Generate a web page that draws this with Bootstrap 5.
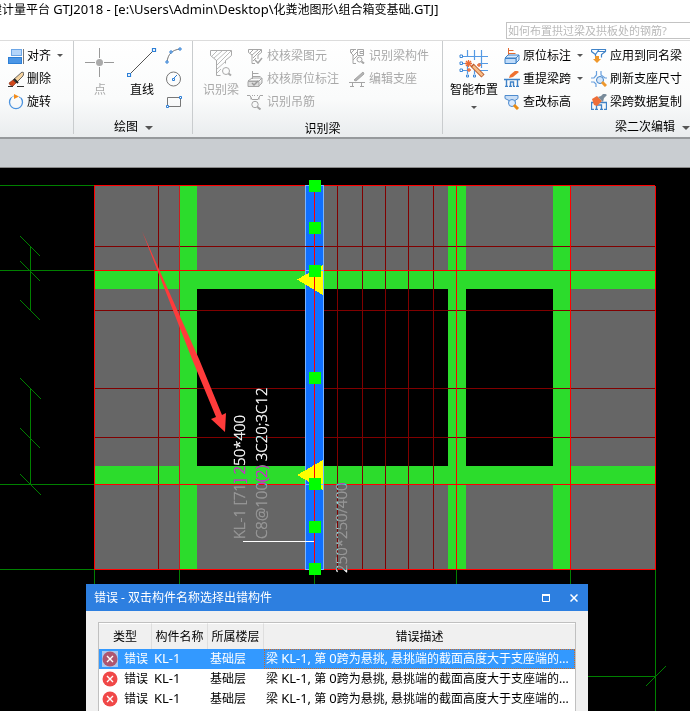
<!DOCTYPE html>
<html lang="zh-CN">
<head>
<meta charset="utf-8">
<meta name="viewport" content="width=device-width, initial-scale=1">
<title>计量平台 GTJ2018</title>
<link href="https://cdn.jsdelivr.net/npm/bootstrap@5.3.0/dist/css/bootstrap.min.css" rel="stylesheet">
<style>
  body { font-family: "Noto Sans", "Noto Sans CJK SC", sans-serif; font-size: 12px; line-height: 20px; color: #000; background: #fff; }
  .latin { font-size: 13px; line-height: 1; }
  .app-title { height: 22px; margin-left: -10px; }
  .search-row { height: 18px; }
  .ask-box { width: 184px; height: 17px; border: 1px solid #c3c3c3; border-right: 0; font-size: 11px; color: #555; outline: 0; padding: 0 1px; }
  .ask-box::placeholder { color: #b9b9b9; opacity: 1; }
  .ribbon { border-top: 1px solid #dcdcdc; border-bottom: 2px solid #96999c; height: 99px; background: linear-gradient(#fff, #fafbfb 60%, #e9ecee); }
  .ribbon button { border: 0; background: none; padding: 0; color: inherit; white-space: nowrap; line-height: 20px; text-align: left; }
  .ribbon button:disabled { color: #a9a9a9; }
  .ribbon svg { display: block; flex: none; }
  .tool-group { padding: 3px 0 2px; border-right: 1px solid #c9ccce; margin-bottom: 3px; }
  .tool-group:last-child { border-right: 0; }
  .g-edit { width: 74px; padding-left: 8px; }
  .g-draw { width: 119px; padding-left: 11px; }
  .g-find { width: 250px; padding-left: 10px; }
  .g-beam { padding-left: 7px; }
  .tool-list > button { height: 23px; display: flex; align-items: center; gap: 3px; }
  .g-find .tool-list > button { gap: 4px; }
  .big-tool { display: flex; flex-direction: column; align-items: center; height: 69px; padding-top: 4px !important; gap: 2px; }
  .group-name { height: 20px; margin-top: 4px; }
  .group-name.plain { padding-top: 2px; }
  .g-draw .group-name { padding-right: 10px; }
  .drop-mark { display: inline-block; border: 3px solid transparent; border-top-color: #555; border-bottom: 0; flex: none; }
  .drop-mark.wide { border-width: 4px 4px 0; }
  .tool-list .drop-mark { margin-left: 3px; }
  .col-check { width: 102px; }
  .col-label { width: 87px; margin-left: 6px; }
  .tab-strip { height: 29px; background: #c9cdd1; border-bottom: 1px solid #888; }
  .stage { background: #000; min-height: 0; }
  .axis { stroke: #008000; }
  .grid-red { stroke: #f00; }
  .grid-dark { stroke: #800000; }
  .annot { font-family: "Noto Sans", sans-serif; font-size: 15px; font-weight: 300; fill: #fff; stroke: #fff; stroke-width: .3; mix-blend-mode: difference; }
  .err-window { left: 86px; top: 416px; width: 502px; background: #f0f0f0; }
  .err-title { height: 27px; background: #2d7fe0; color: #fff; padding: 0 9px 0 8px; }
  .err-title button { border: 0; background: none; padding: 0; width: 10px; height: 12px; line-height: 0; }
  .err-tools { gap: 18px; }
  .err-body { padding: 11px 12px 12px; }
  .err-table { table-layout: fixed; width: 100%; background: #fff; border: 1px solid #c0c0c0; border-collapse: separate; border-spacing: 0; }
  .err-table th { height: 26px; padding: 0; text-align: center; font-weight: 400; background: #f0f0f0; border-right: 1px solid #dedede; border-top: 1px solid #fff; }
  .err-table th:last-child { border-right: 0; }
  .err-table td { height: 20px; line-height: 18px; padding: 0 4px 0 2px; white-space: nowrap; overflow: hidden; }
  .err-table td:first-child { padding-left: 3px; }
  .err-table .picked td { background: #3399ff; color: #fff; }
  .err-table .picked td:last-child { outline: 1px dotted #d2691e; outline-offset: -1px; }
  .c-kind { width: 53px; } .c-name { width: 56px; } .c-floor { width: 56px; }
  .picked .bad-mark { background: #a9c9ef; }
  .picked .bad-mark circle { fill: #ae5670; }
</style>
<script src="https://cdn.jsdelivr.net/npm/bootstrap@5.3.0/dist/js/bootstrap.bundle.min.js"></script>
</head>
<body class="vh-100 d-flex flex-column overflow-hidden">
<header>
  <div class="app-title text-nowrap">建计量平台 <span class="latin">GTJ2018 - [e:\Users\Admin\Desktop\</span>化粪池图形<span class="latin">\</span>组合箱变基础<span class="latin">.GTJ]</span></div>
  <div class="search-row d-flex justify-content-end">
    <input class="ask-box" type="text" aria-label="搜索帮助" placeholder="如何布置拱过梁及拱板处的钢筋?">
  </div>
  <div class="ribbon d-flex">
    <section class="tool-group g-edit">
      <div class="tool-list">
        <button type="button"><svg width="16" height="16" fill="none"><rect x="3.500" y="1.500" width="10" height="6" fill="#b3d5fa" stroke="#6ca6e6"/><rect x=".5" y="9.500" width="13" height="6" fill="#4b96e6" stroke="#2d7fd6"/><path d="M15.500 1v15" stroke="#777"/></svg>对齐<span class="drop-mark"></span></button>
        <button type="button"><svg width="16" height="16"><path d="M0 15.500h5m4 0h7" stroke="#333"/><path d="M14 1l2 1-1 3-7 7-3-3z" fill="#f5d3a0" stroke="#444" stroke-width=".8"/><path d="M5 9l3 3-3 3-3-1-1-2z" fill="#d2481c" stroke="#7a2a10" stroke-width=".6"/><path d="M6 8l4 4" stroke="#222" stroke-width="2"/></svg>删除</button>
        <button type="button"><svg width="16" height="16" fill="none"><path d="M3 4a6.500 6.500 0 1 0 10 0" stroke="#4c93df" stroke-width="1.300"/><path d="M3 4a6 6 0 0 1 3-2m5 1 2 1" stroke="#4c93df" stroke-dasharray="2 1"/><path d="M6 0l5 2.500L6 5z" fill="#f28c1c"/></svg>旋转</button>
      </div>
      <div class="group-name"></div>
    </section>
    <section class="tool-group g-draw">
      <div class="d-flex">
        <button type="button" class="big-tool" disabled><svg width="30" height="30"><path d="M14.500 0v10m0 9v10M0 14.500h10m9 0h10" stroke="#999"/><circle cx="14.500" cy="14.500" r="3.500" fill="#aaa"/></svg>点</button>
        <button type="button" class="big-tool ms-2 ps-1"><svg width="30" height="30" fill="#fff"><path d="M2 27L27 2" stroke="#555"/><path d="M.5 25.500h3v3h-3zM25.500 .5h3v3h-3z" stroke="#2d7fd6" stroke-width="1.200"/></svg>直线</button>
        <div class="tool-list ms-2">
          <button type="button" aria-label="弧线"><svg width="18" height="18" fill="none"><path d="M2 15C3 7 7 3 15 2" stroke="#777"/><g fill="#fff" stroke="#2d7fd6"><path d="M1 14h2v2H1zM5 4h2v2H5zM14 1h2v2h-2z"/></g></svg></button>
          <button type="button" aria-label="圆"><svg width="18" height="18" fill="none"><circle cx="8.500" cy="9" r="7" stroke="#777"/><path d="M8 9l4-4" stroke="#2d7fd6"/><path d="M7.500 8.500h2v2h-2z" fill="#fff" stroke="#2d7fd6"/></svg></button>
          <button type="button" aria-label="矩形"><svg width="18" height="18" fill="none"><path d="M2.500 4.500h13v9h-13z" stroke="#777"/><g fill="#fff" stroke="#2d7fd6"><path d="M1.500 12.500h2v2h-2zM14.500 3.500h2v2h-2z"/></g></svg></button>
        </div>
      </div>
      <div class="group-name text-center"><button type="button">绘图 <span class="drop-mark wide align-middle ms-1"></span></button></div>
    </section>
    <section class="tool-group g-find">
      <div class="d-flex">
        <button type="button" class="big-tool" disabled><svg width="30" height="30" fill="none" stroke="#aaa"><path d="M4.500 2.500h21v5l-6 5v3M4.500 2.500v5l6 5v15h4"/><path d="M6 8l5-5M8 10l8-7M10 13L21 3M11 17L25 3M11 21l8-7M11 25l4-4" stroke-width=".8"/><circle cx="20" cy="23" r="3.500"/><path d="M22.500 25.500l2.500 2" stroke-width="2"/></svg>识别梁</button>
        <div class="tool-list ms-2 col-check">
          <button type="button" disabled><svg width="16" height="16" fill="none" stroke="#a5a5a5"><path d="M1.500 1.500h13v3L11 7v4M1.500 1.500v3L5 7v8.500h3M3 5l3-3M5 7l6-5M6 10l8-8M6 13l3-3"/><path d="M8 12l3 3 4-5" stroke-width="1.500"/></svg>校核梁图元</button>
          <button type="button" disabled><svg width="16" height="16" fill="none" stroke="#a5a5a5"><path d="M5.500 0v8M5.500 2.500h6M5.500 5.500h8M1 10l4-3h10l-3 3z"/><path d="M1 10.500h11v5H1zM12 15l3-3V7" fill="#ddd"/><path d="M5 12l2 2 4-4" stroke="#999" stroke-width="1.500"/></svg>校核原位标注</button>
          <button type="button" disabled><svg width="16" height="16" fill="none" stroke="#a5a5a5"><path d="M0 1.500h3l2 4h6l2-4h3M5 1.500h1m1 0h1m2 0h1M4 5.500v-2m8 2v-2"/><circle cx="8" cy="10.500" r="3.200"/><path d="M10.500 13l3 2.500" stroke-width="2"/></svg>识别吊筋</button>
        </div>
        <div class="tool-list">
          <button type="button" disabled><svg width="16" height="16" fill="none" stroke="#a5a5a5"><path d="M7 1.500H1.500v3L4 7v8.500h3M2 5l4-4M4 8l4-4M4 12l4-4M8.500 1.500h6v6h-6zM14 3.500h-3v2h3"/><circle cx="10.500" cy="11.500" r="2.500"/><path d="M12.500 13.500l2.500 2" stroke-width="2"/></svg>识别梁构件</button>
          <button type="button" disabled><svg width="16" height="16" fill="none" stroke="#a5a5a5"><path d="M0 11.500h16M3.500 12v3.500m9-3.500v3.500M1 15.500h4m6 0h4"/><path d="M5 9l9-8 1 2-8 7z" fill="#b5b5b5"/></svg>编辑支座</button>
        </div>
      </div>
      <div class="group-name plain text-center">识别梁</div>
    </section>
    <section class="tool-group g-beam flex-grow-1">
      <div class="d-flex">
        <button type="button" class="big-tool"><svg width="30" height="30" fill="none"><path d="M3 8.500h26M3 15.500h7M20 15.500h9M3 22.500h6m9 0h11M8.500 2v7m0 8v9M15.500 2v10m0 6v8M22.500 2v18" stroke="#559ae4" stroke-width="1.200"/><g fill="#fff" stroke="#3b86d8"><path d="M1 7h2.500v2.500H1zM1 14h2.500v2.500H1zM1 21h2.500v2.500H1zM7.500 27h2v2h-2zM14.500 27h2v2h-2z"/></g><path d="M7 13l5 5m0-5l-5 5M9.500 12v7M6 15.500h7M20 15v4m-2-2h4M10 20v4m-2-2h4" stroke="#ec6b35" stroke-width="1.300"/><path d="M13 17l11 11" stroke="#b8572a" stroke-width="4.500"/><path d="M14 18l9.500 9.500" stroke="#f7bd87" stroke-width="2.500"/></svg>智能布置<span class="drop-mark mt-1"></span></button>
        <div class="tool-list col-label">
          <button type="button"><svg width="16" height="16" fill="none"><path d="M4.500 0v9M4.500 2.500h5M4.500 5.500h7" stroke="#e36b31"/><path d="M1 10l3-3h11l-3 3zM12 15l3-3V7l-3 3z" fill="#d9eafc" stroke="#3f82c7"/><path d="M1 10.500h11v5H1z" fill="#c0dcfa" stroke="#3f82c7"/></svg>原位标注<span class="drop-mark"></span></button>
          <button type="button"><svg width="16" height="16" fill="none"><path d="M0 8.500h16M2.500 9v6M6.500 15v-4h3v4M13.500 9v6M1 15.500h3m1 0h3m1 0h2m1 0h3" stroke="#3f82c7" stroke-width="1.400"/><path d="M5 7l1-3 6-5 3 2-6 5z" fill="#ef7131"/></svg>重提梁跨<span class="drop-mark"></span></button>
          <button type="button"><svg width="16" height="16"><path d="M1 1.500h13v3l-3 2v3H5v-3l-4-2z" fill="#c9def5" stroke="#4e8bce"/><circle cx="8" cy="9" r="3.500" fill="#d9eaff" stroke="#4e8bce"/><path d="M10 11l4 4" stroke="#e98b12" stroke-width="3"/></svg>查改标高</button>
        </div>
        <div class="tool-list">
          <button type="button"><svg width="16" height="16" fill="none"><path d="M.5 1.500h14v2l-4 3v3M.5 1.500v2l4 3v2M4.500 6.500L8 1.500M14.500 3.500h-8" stroke="#3f82c7" stroke-width="1.200"/><path d="M4 8h4v3h2l-4 4-4-4h2z" fill="#ef982c"/></svg>应用到同名梁</button>
          <button type="button"><svg width="16" height="16" fill="none"><path d="M5.500 0v4L3 7H0m10-7v4l4 3h2M0 11h3l2 2v3" stroke="#68a0df" stroke-width="1.200"/><circle cx="9" cy="9" r="3.500" fill="#d6e7fb" stroke="#3f82c7"/><path d="M11 11l4 4" stroke="#ef982c" stroke-width="3"/></svg>刷新支座尺寸</button>
          <button type="button"><svg width="16" height="16" fill="none"><path d="M.5 15V8.500h15V15M5.500 15v-4h5v4M0 15.500h3m1 0h3m2 0h3m1 0h3" stroke="#3f82c7" stroke-width="1.300"/><path d="M1 5l5-3 5 5-5 5-3-1z" fill="#ed6e38"/><path d="M7 3l3-1 3-3 3 2-3 3-1 4z" fill="#788b9b"/></svg>梁跨数据复制</button>
        </div>
      </div>
      <div class="group-name text-end"><button type="button">梁二次编辑 <span class="drop-mark wide align-middle ms-1"></span></button></div>
    </section>
  </div>
  <div class="tab-strip"></div>
</header>
<main class="stage flex-grow-1 position-relative overflow-hidden">
  <svg class="d-block w-100 h-100" role="img" aria-label="梁平面图">
    <g transform="translate(0 -168)" fill="none" shape-rendering="crispEdges">
      <path fill="#666" d="M95 186h560v383H95z"/>
      <path fill="#000" d="M197 289h356v177H197z"/>
      <path fill="#2cdc2c" d="M95 271h560v18H95zM95 466h560v18H95zM180 186h17v383h-17zM448 186h18v383h-18zM553 186h17v383h-17z"/>
      <path class="axis" d="M0 185.500h94M0 270.500h94M0 484.500h94M0 569.500h94M94.500 570v141M179.500 570v141M314.500 570v141M456.500 570v141M570.500 570v141M655.500 570v141M30.500 246v64M30.500 388v97M588 676.500h67"/>
      <path class="axis" d="M20 236l20 20M20 261l20 20M20 300l20 20M20 378l21 21M20 428l20 20M20 474l21 21M646 686l20-20"/>
      <path class="grid-dark" d="M158.500 186v383M337.500 186v383M362.500 186v383M385.500 186v383M408.500 186v383M433.500 186v383M95 310.500h560M95 388.500h560M95 437.500h560M95 246.500h560"/>
      <path class="grid-red" d="M94.500 185v385M94 185.500h561M94 270.500h561M94 484.500h561M94 569.500h561M456.500 186v383M570.500 186v383M655.500 186v384"/>
      <path stroke="#c81e1e" d="M179.500 186v383"/>
      <path fill="#1070ff" stroke="#78b4ff" d="M305.500 185.500h18v384h-18z"/>
      <path class="grid-dark" d="M305 246.500h18"/>
      <path fill="#ff0" d="M297 279.500L323 265v30zM297 475L323 460v30z"/>
      <path stroke="#78b4ff" d="M305 270.500h18M305 484.500h18"/>
      <path class="grid-red" d="M314.500 186v383"/>
      <path stroke="#fff" d="M243 541.500h71"/>
      <path fill="#0f0" d="M309 180h12v12h-12zM309 222h12v12h-12zM309 265h12v12h-12zM309 372h12v12h-12zM309 478h12v12h-12zM309 521h12v12h-12zM309 563h12v12h-12z"/>
      <path fill="#ff3b3b" shape-rendering="auto" d="M142 231L199 359 222 415 226 413 225 432 211 419 216 417 192 359z"/>
      <text class="annot" transform="translate(245 539) rotate(-90)">KL-1 [71] 250*400</text>
      <text class="annot" transform="translate(267 539) rotate(-90)">C8@100(2) 3C20;3C12</text>
      <text class="annot" transform="translate(347 573) rotate(-90)">250*250/400</text>
    </g>
  </svg>
  <section class="err-window position-absolute" role="dialog" aria-labelledby="errTitle">
    <div class="err-title d-flex align-items-center">
      <span id="errTitle" class="me-auto">错误 - 双击构件名称选择出错构件</span>
      <div class="err-tools d-flex">
        <button type="button" aria-label="最大化"><svg width="8" height="8"><path d="M.5 1v6.500h7V1" fill="none" stroke="#fff"/><path d="M0 1h8" stroke="#fff" stroke-width="2"/></svg></button>
        <button type="button" aria-label="关闭"><svg width="8" height="8"><path d="M.5 .5l7 7m0-7l-7 7" stroke="#fff" stroke-width="1.500"/></svg></button>
      </div>
    </div>
    <div class="err-body">
      <table class="err-table">
        <thead><tr><th class="c-kind">类型</th><th class="c-name">构件名称</th><th class="c-floor">所属楼层</th><th>错误描述</th></tr></thead>
        <tbody>
          <tr class="picked"><td><div class="d-flex align-items-center justify-content-between"><svg class="bad-mark" width="16" height="16"><circle cx="8" cy="8" r="7.500" fill="#f04848"/><path d="M5 5l6 6m0-6l-6 6" stroke="#fff" stroke-width="1.400"/></svg>错误</div></td><td><span class="latin">KL-1</span></td><td>基础层</td><td>梁 <span class="latin">KL-1,</span> 第 <span class="latin">0</span>跨为悬挑, 悬挑端的截面高度大于支座端的...</td></tr>
          <tr><td><div class="d-flex align-items-center justify-content-between"><svg class="bad-mark" width="16" height="16"><circle cx="8" cy="8" r="7.500" fill="#f04848"/><path d="M5 5l6 6m0-6l-6 6" stroke="#fff" stroke-width="1.400"/></svg>错误</div></td><td><span class="latin">KL-1</span></td><td>基础层</td><td>梁 <span class="latin">KL-1,</span> 第 <span class="latin">0</span>跨为悬挑, 悬挑端的截面高度大于支座端的...</td></tr>
          <tr><td><div class="d-flex align-items-center justify-content-between"><svg class="bad-mark" width="16" height="16"><circle cx="8" cy="8" r="7.500" fill="#f04848"/><path d="M5 5l6 6m0-6l-6 6" stroke="#fff" stroke-width="1.400"/></svg>错误</div></td><td><span class="latin">KL-1</span></td><td>基础层</td><td>梁 <span class="latin">KL-1,</span> 第 <span class="latin">0</span>跨为悬挑, 悬挑端的截面高度大于支座端的...</td></tr>
          <tr><td><svg class="bad-mark d-block mt-1" width="16" height="16"><circle cx="8" cy="8" r="7.500" fill="#f04848"/></svg></td><td></td><td></td><td></td></tr>
        </tbody>
      </table>
    </div>
  </section>
</main>
</body>
</html>
